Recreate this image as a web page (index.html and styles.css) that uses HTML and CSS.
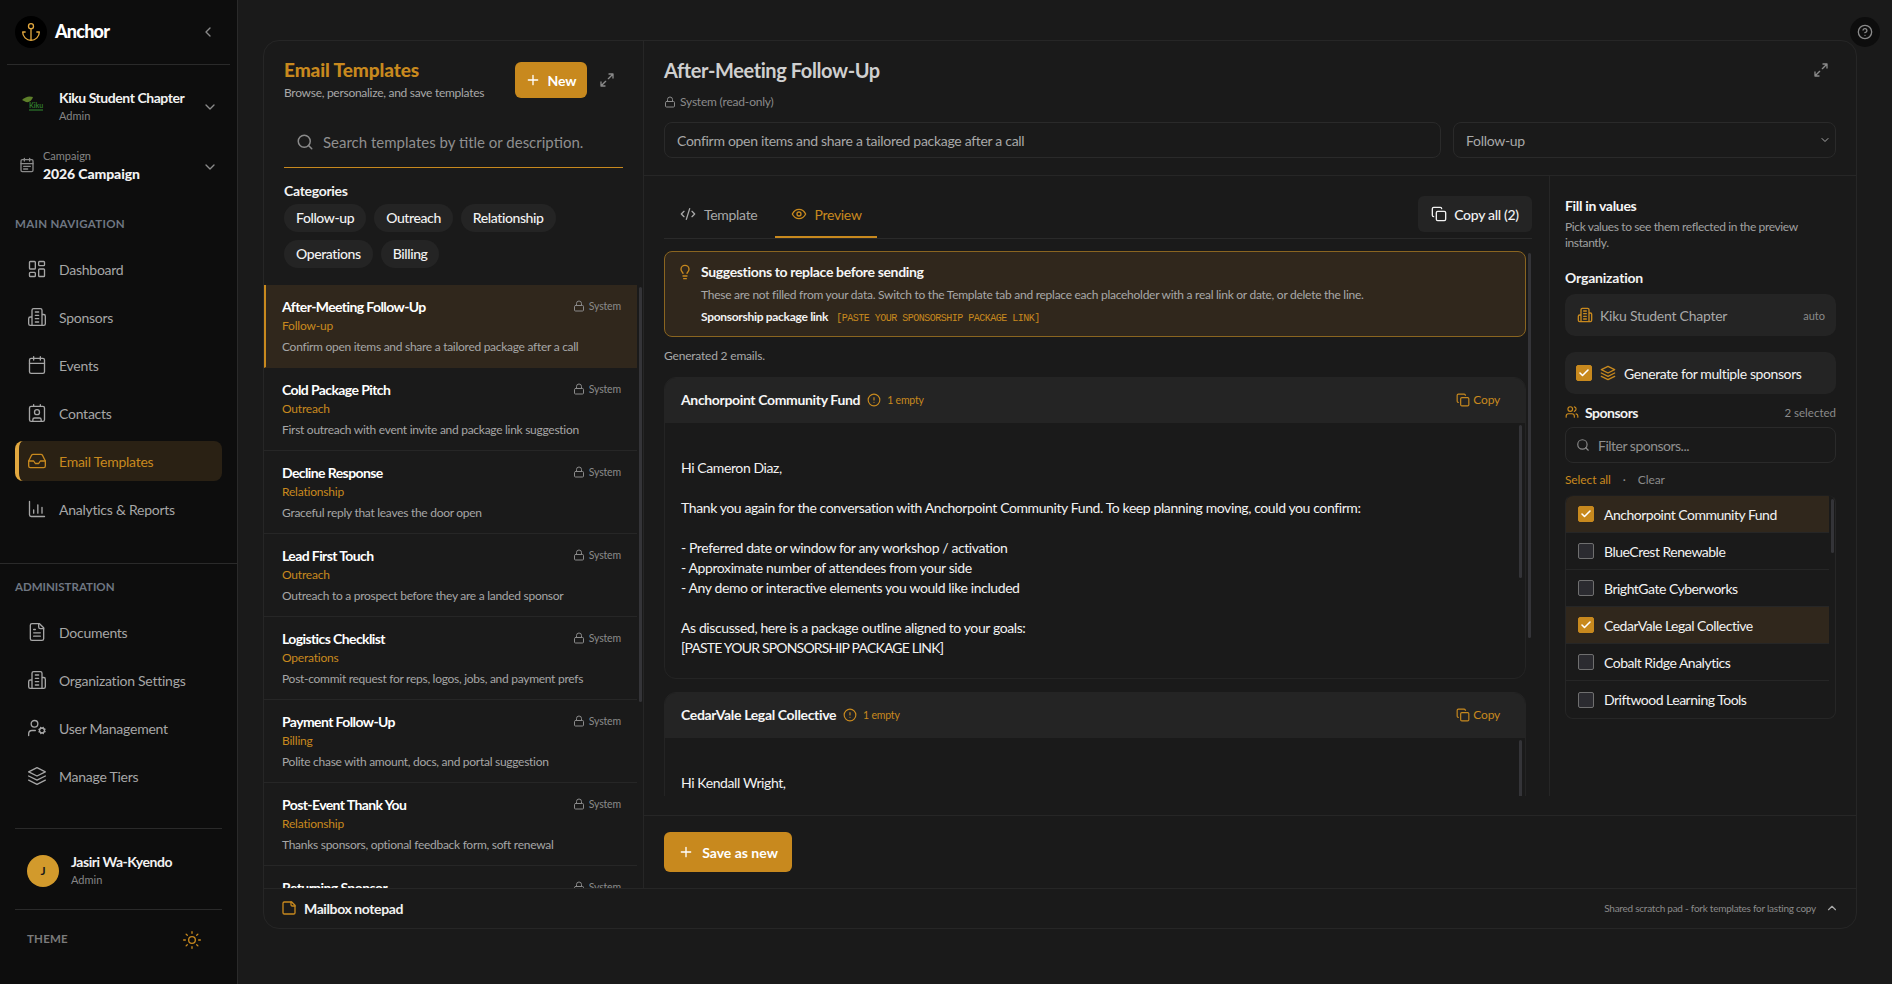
FILE: index.html
```html
<!DOCTYPE html>
<html lang="en">
<head>
<meta charset="utf-8">
<title>Anchor - Email Templates</title>
<link rel="stylesheet" href="styles.css">
</head>
<body>
<svg class="sprite" aria-hidden="true">
<defs>
<symbol id="i-left" viewBox="0 0 24 24"><path d="m15 18-6-6 6-6"/></symbol>
<symbol id="i-down" viewBox="0 0 24 24"><path d="m6 9 6 6 6-6"/></symbol>
<symbol id="i-up" viewBox="0 0 24 24"><path d="m18 15-6-6-6 6"/></symbol>
<symbol id="i-anchor" viewBox="0 0 24 24"><circle cx="12" cy="5" r="3"/><path d="M12 22V8M5 12H2a10 10 0 0 0 20 0h-3"/></symbol>
<symbol id="i-camp" viewBox="0 0 24 24"><rect x="3" y="4" width="18" height="18" rx="2"/><path d="M16 2v4M8 2v4M3 10h18M7 14h10M7 18h6"/></symbol>
<symbol id="i-dash" viewBox="0 0 24 24"><rect x="3" y="3" width="7" height="9" rx="1"/><rect x="14" y="3" width="7" height="5" rx="1"/><rect x="14" y="12" width="7" height="9" rx="1"/><rect x="3" y="16" width="7" height="5" rx="1"/></symbol>
<symbol id="i-bld" viewBox="0 0 24 24"><path d="M6 22V4a2 2 0 0 1 2-2h8a2 2 0 0 1 2 2v18ZM6 12H4a2 2 0 0 0-2 2v6a2 2 0 0 0 2 2h2M18 9h2a2 2 0 0 1 2 2v9a2 2 0 0 1-2 2h-2M10 6h4M10 10h4M10 14h4M10 18h4"/></symbol>
<symbol id="i-cal" viewBox="0 0 24 24"><rect x="3" y="4" width="18" height="18" rx="2"/><path d="M16 2v4M8 2v4M3 10h18"/></symbol>
<symbol id="i-contact" viewBox="0 0 24 24"><path d="M16 2v2M7 22v-2a2 2 0 0 1 2-2h6a2 2 0 0 1 2 2v2M8 2v2"/><circle cx="12" cy="11" r="3"/><rect x="3" y="4" width="18" height="18" rx="2"/></symbol>
<symbol id="i-inbox" viewBox="0 0 24 24"><path d="M22 12h-6l-2 3h-4l-2-3H2"/><path d="M5.45 5.11 2 12v6a2 2 0 0 0 2 2h16a2 2 0 0 0 2-2v-6l-3.45-6.89A2 2 0 0 0 16.76 4H7.24a2 2 0 0 0-1.79 1.11z"/></symbol>
<symbol id="i-chart" viewBox="0 0 24 24"><path d="M3 3v16a2 2 0 0 0 2 2h16M8 17v-4M13 17V7M18 17v-7"/></symbol>
<symbol id="i-file" viewBox="0 0 24 24"><path d="M15 2H6a2 2 0 0 0-2 2v16a2 2 0 0 0 2 2h12a2 2 0 0 0 2-2V7Z"/><path d="M14 2v4a2 2 0 0 0 2 2h4M10 9H8M16 13H8M16 17H8"/></symbol>
<symbol id="i-ucog" viewBox="0 0 24 24"><circle cx="18" cy="15" r="3"/><circle cx="9" cy="7" r="4"/><path d="M10 15H6a4 4 0 0 0-4 4v2M21.7 16.4l-.9-.3M15.2 13.9l-.9-.3M16.6 18.7l.3-.9M19.1 12.2l.3-.9M19.6 18.7l-.4-1M16.8 12.3l-.4-1M14.3 16.6l1-.4M20.7 13.8l1-.4"/></symbol>
<symbol id="i-layers" viewBox="0 0 24 24"><path d="M12 2 2 7l10 5 10-5-10-5Z"/><path d="m2 12 10 5 10-5M2 17l10 5 10-5"/></symbol>
<symbol id="i-sun" viewBox="0 0 24 24"><circle cx="12" cy="12" r="4"/><path d="M12 2v2M12 20v2M4.93 4.93l1.41 1.41M17.66 17.66l1.41 1.41M2 12h2M20 12h2M6.34 17.66l-1.41 1.41M19.07 4.93l-1.41 1.41"/></symbol>
<symbol id="i-plus" viewBox="0 0 24 24"><path d="M5 12h14M12 5v14"/></symbol>
<symbol id="i-expand" viewBox="0 0 24 24"><path d="M15 3h6v6M9 21H3v-6M21 3l-7 7M3 21l7-7"/></symbol>
<symbol id="i-search" viewBox="0 0 24 24"><circle cx="11" cy="11" r="8"/><path d="m21 21-4.3-4.3"/></symbol>
<symbol id="i-lock" viewBox="0 0 24 24"><rect x="3" y="11" width="18" height="11" rx="2"/><path d="M7 11V7a5 5 0 0 1 10 0v4"/></symbol>
<symbol id="i-code" viewBox="0 0 24 24"><path d="m18 16 4-4-4-4M6 8l-4 4 4 4M14.5 4l-5 16"/></symbol>
<symbol id="i-eye" viewBox="0 0 24 24"><path d="M2 12s3.5-7 10-7 10 7 10 7-3.5 7-10 7-10-7-10-7Z"/><circle cx="12" cy="12" r="3"/></symbol>
<symbol id="i-copy" viewBox="0 0 24 24"><rect x="8" y="8" width="14" height="14" rx="2"/><path d="M4 16c-1.100 0-2-.9-2-2V4c0-1.100.9-2 2-2h10c1.100 0 2 .9 2 2"/></symbol>
<symbol id="i-bulb" viewBox="0 0 24 24"><path d="M15 14c.2-1 .7-1.700 1.500-2.500 1-.9 1.500-2.200 1.500-3.500A6 6 0 0 0 6 8c0 1 .2 2.200 1.500 3.500.7.7 1.300 1.500 1.500 2.500M9 18h6M10 22h4"/></symbol>
<symbol id="i-alert" viewBox="0 0 24 24"><circle cx="12" cy="12" r="10"/><path d="M12 8v4M12 16h.01"/></symbol>
<symbol id="i-users" viewBox="0 0 24 24"><path d="M16 21v-2a4 4 0 0 0-4-4H6a4 4 0 0 0-4 4v2"/><circle cx="9" cy="7" r="4"/><path d="M22 21v-2a4 4 0 0 0-3-3.870M16 3.130a4 4 0 0 1 0 7.750"/></symbol>
<symbol id="i-note" viewBox="0 0 24 24"><path d="M16 3H5a2 2 0 0 0-2 2v14a2 2 0 0 0 2 2h14a2 2 0 0 0 2-2V8Z"/><path d="M15 3v4a2 2 0 0 0 2 2h4"/></symbol>
<symbol id="i-help" viewBox="0 0 24 24"><circle cx="12" cy="12" r="10"/><path d="M9.090 9a3 3 0 0 1 5.830 1c0 2-3 3-3 3M12 17h.01"/></symbol>
<symbol id="i-check" viewBox="0 0 24 24"><path d="M20 6 9 17l-5-5"/></symbol>
</defs>
</svg>

<div class="shell">
  <aside class="sidebar">
    <div class="brand">
      <span class="brand-mark"><svg class="ic ic-20 gold-soft"><use href="#i-anchor"/></svg></span>
      <span class="brand-name">Anchor</span>
      <svg class="ic ic-16 muted brand-toggle"><use href="#i-left"/></svg>
    </div>
    <div class="org">
      <span class="org-logo">
        <svg class="org-leaf" viewBox="0 0 12 8"><path d="M0 4 Q5 -1 11 1 Q9 7 4 6 Z"/></svg>
        <span class="org-kiku">Kiku</span>
      </span>
      <span class="stack">
        <span class="org-name">Kiku Student Chapter</span>
        <span class="org-role">Admin</span>
      </span>
      <svg class="ic ic-16 muted push"><use href="#i-down"/></svg>
    </div>
    <div class="camp">
      <svg class="ic ic-16 muted"><use href="#i-camp"/></svg>
      <span class="stack">
        <span class="org-role">Campaign</span>
        <span class="org-name bold">2026 Campaign</span>
      </span>
      <svg class="ic ic-16 muted push"><use href="#i-down"/></svg>
    </div>
    <div class="nav-label">MAIN NAVIGATION</div>
    <nav class="nav">
      <a class="nav-item"><svg class="ic ic-20"><use href="#i-dash"/></svg>Dashboard</a>
      <a class="nav-item"><svg class="ic ic-20"><use href="#i-bld"/></svg>Sponsors</a>
      <a class="nav-item"><svg class="ic ic-20"><use href="#i-cal"/></svg>Events</a>
      <a class="nav-item"><svg class="ic ic-20"><use href="#i-contact"/></svg>Contacts</a>
      <a class="nav-item active"><svg class="ic ic-20"><use href="#i-inbox"/></svg>Email Templates</a>
      <a class="nav-item"><svg class="ic ic-20"><use href="#i-chart"/></svg>Analytics &amp; Reports</a>
    </nav>
    <div class="side-rule"></div>
    <div class="nav-label admin">ADMINISTRATION</div>
    <nav class="nav">
      <a class="nav-item"><svg class="ic ic-20"><use href="#i-file"/></svg>Documents</a>
      <a class="nav-item"><svg class="ic ic-20"><use href="#i-bld"/></svg>Organization Settings</a>
      <a class="nav-item"><svg class="ic ic-20"><use href="#i-ucog"/></svg>User Management</a>
      <a class="nav-item"><svg class="ic ic-20"><use href="#i-layers"/></svg>Manage Tiers</a>
    </nav>
    <div class="user">
      <span class="avatar">J</span>
      <span class="stack">
        <span class="org-name">Jasiri Wa-Kyendo</span>
        <span class="org-role">Admin</span>
      </span>
    </div>
    <div class="theme">
      <span class="theme-label">THEME</span>
      <svg class="ic ic-20 gold"><use href="#i-sun"/></svg>
    </div>
  </aside>

  <main class="main">
    <section class="panel">
      <div class="panel-top">
        <div class="col-list">
          <div class="list-head">
            <div class="list-title-wrap">
              <h1 class="list-title">Email Templates</h1>
              <p class="list-sub">Browse, personalize, and save templates</p>
            </div>
            <button class="btn-new"><svg class="ic ic-16"><use href="#i-plus"/></svg>New</button>
            <svg class="ic ic-16 muted"><use href="#i-expand"/></svg>
          </div>
          <div class="search">
            <svg class="ic ic-18 muted"><use href="#i-search"/></svg>
            <span>Search templates by title or description.</span>
          </div>
          <div class="cats-label">Categories</div>
          <div class="chips">
            <span class="chip">Follow-up</span>
            <span class="chip">Outreach</span>
            <span class="chip">Relationship</span>
            <span class="chip">Operations</span>
            <span class="chip">Billing</span>
          </div>
          <div class="items">
            <article class="item selected">
              <div class="item-row"><span class="item-title">After-Meeting Follow-Up</span><span class="sys"><svg class="ic ic-12"><use href="#i-lock"/></svg>System</span></div>
              <div class="item-cat">Follow-up</div>
              <div class="item-desc">Confirm open items and share a tailored package after a call</div>
            </article>
            <article class="item">
              <div class="item-row"><span class="item-title">Cold Package Pitch</span><span class="sys"><svg class="ic ic-12"><use href="#i-lock"/></svg>System</span></div>
              <div class="item-cat">Outreach</div>
              <div class="item-desc">First outreach with event invite and package link suggestion</div>
            </article>
            <article class="item">
              <div class="item-row"><span class="item-title">Decline Response</span><span class="sys"><svg class="ic ic-12"><use href="#i-lock"/></svg>System</span></div>
              <div class="item-cat">Relationship</div>
              <div class="item-desc">Graceful reply that leaves the door open</div>
            </article>
            <article class="item">
              <div class="item-row"><span class="item-title">Lead First Touch</span><span class="sys"><svg class="ic ic-12"><use href="#i-lock"/></svg>System</span></div>
              <div class="item-cat">Outreach</div>
              <div class="item-desc">Outreach to a prospect before they are a landed sponsor</div>
            </article>
            <article class="item">
              <div class="item-row"><span class="item-title">Logistics Checklist</span><span class="sys"><svg class="ic ic-12"><use href="#i-lock"/></svg>System</span></div>
              <div class="item-cat">Operations</div>
              <div class="item-desc">Post-commit request for reps, logos, jobs, and payment prefs</div>
            </article>
            <article class="item">
              <div class="item-row"><span class="item-title">Payment Follow-Up</span><span class="sys"><svg class="ic ic-12"><use href="#i-lock"/></svg>System</span></div>
              <div class="item-cat">Billing</div>
              <div class="item-desc">Polite chase with amount, docs, and portal suggestion</div>
            </article>
            <article class="item">
              <div class="item-row"><span class="item-title">Post-Event Thank You</span><span class="sys"><svg class="ic ic-12"><use href="#i-lock"/></svg>System</span></div>
              <div class="item-cat">Relationship</div>
              <div class="item-desc">Thanks sponsors, optional feedback form, soft renewal</div>
            </article>
            <article class="item">
              <div class="item-row"><span class="item-title">Returning Sponsor</span><span class="sys"><svg class="ic ic-12"><use href="#i-lock"/></svg>System</span></div>
            </article>
            <span class="thumb thumb-list"></span>
          </div>
        </div>

        <div class="col-detail">
          <header class="detail-head">
            <div class="detail-title-row">
              <h2 class="detail-title">After-Meeting Follow-Up</h2>
              <svg class="ic ic-16 muted"><use href="#i-expand"/></svg>
            </div>
            <div class="readonly"><svg class="ic ic-12"><use href="#i-lock"/></svg>System (read-only)</div>
            <div class="fields">
              <div class="field field-desc">Confirm open items and share a tailored package after a call</div>
              <div class="field field-cat">Follow-up<svg class="ic ic-12 light"><use href="#i-down"/></svg></div>
            </div>
          </header>
          <div class="detail-body">
            <div class="editor">
              <div class="tabs">
                <span class="tab"><svg class="ic ic-16"><use href="#i-code"/></svg>Template</span>
                <span class="tab on"><svg class="ic ic-16"><use href="#i-eye"/></svg>Preview</span>
                <button class="btn-copyall"><svg class="ic ic-16"><use href="#i-copy"/></svg>Copy all (2)</button>
              </div>
              <div class="scroller">
                <div class="alert">
                  <svg class="ic ic-16 gold"><use href="#i-bulb"/></svg>
                  <div class="alert-body">
                    <div class="alert-title">Suggestions to replace before sending</div>
                    <div class="alert-text">These are not filled from your data. Switch to the Template tab and replace each placeholder with a real link or date, or delete the line.</div>
                    <div class="alert-link"><b>Sponsorship package link</b><code>[PASTE YOUR SPONSORSHIP PACKAGE LINK]</code></div>
                  </div>
                </div>
                <div class="generated">Generated 2 emails.</div>
                <div class="card">
                  <div class="card-head">
                    <span class="card-name">Anchorpoint Community Fund</span>
                    <svg class="ic ic-14 gold"><use href="#i-alert"/></svg>
                    <span class="card-empty">1 empty</span>
                    <span class="card-copy"><svg class="ic ic-14"><use href="#i-copy"/></svg>Copy</span>
                  </div>
                  <div class="card-body">Hi Cameron Diaz,

Thank you again for the conversation with Anchorpoint Community Fund. To keep planning moving, could you confirm:

- Preferred date or window for any workshop / activation
- Approximate number of attendees from your side
- Any demo or interactive elements you would like included

As discussed, here is a package outline aligned to your goals:
<span class="placeholder">[PASTE YOUR SPONSORSHIP PACKAGE LINK]</span></div>
                  <span class="thumb thumb-card"></span>
                </div>
                <div class="card">
                  <div class="card-head">
                    <span class="card-name">CedarVale Legal Collective</span>
                    <svg class="ic ic-14 gold"><use href="#i-alert"/></svg>
                    <span class="card-empty">1 empty</span>
                    <span class="card-copy"><svg class="ic ic-14"><use href="#i-copy"/></svg>Copy</span>
                  </div>
                  <div class="card-body">Hi Kendall Wright,</div>
                  <span class="thumb thumb-card"></span>
                </div>
                <span class="thumb thumb-scroller"></span>
              </div>
            </div>
            <aside class="values">
              <div class="v-title">Fill in values</div>
              <p class="v-sub">Pick values to see them reflected in the preview instantly.</p>
              <div class="v-label">Organization</div>
              <div class="v-box org-box">
                <svg class="ic ic-16 gold"><use href="#i-bld"/></svg>
                <span class="org-box-name">Kiku Student Chapter</span>
                <span class="auto">auto</span>
              </div>
              <div class="v-box multi-box">
                <span class="cb on"><svg class="ic ic-12"><use href="#i-check"/></svg></span>
                <svg class="ic ic-16 gold"><use href="#i-layers"/></svg>
                <span class="multi-text">Generate for multiple sponsors</span>
              </div>
              <div class="sp-head">
                <svg class="ic ic-14 gold"><use href="#i-users"/></svg>
                <span class="sp-title">Sponsors</span>
                <span class="sp-count">2 selected</span>
              </div>
              <div class="filter"><svg class="ic ic-14 muted"><use href="#i-search"/></svg>Filter sponsors...</div>
              <div class="sel-row"><span class="sel-all">Select all</span><span class="sel-dot">&middot;</span><span>Clear</span></div>
              <div class="sp-list">
                <div class="sp-row picked"><span class="cb on"><svg class="ic ic-12"><use href="#i-check"/></svg></span>Anchorpoint Community Fund</div>
                <div class="sp-row"><span class="cb"></span>BlueCrest Renewable</div>
                <div class="sp-row"><span class="cb"></span>BrightGate Cyberworks</div>
                <div class="sp-row picked"><span class="cb on"><svg class="ic ic-12"><use href="#i-check"/></svg></span>CedarVale Legal Collective</div>
                <div class="sp-row"><span class="cb"></span>Cobalt Ridge Analytics</div>
                <div class="sp-row"><span class="cb"></span>Driftwood Learning Tools</div>
                <span class="thumb thumb-sp"></span>
              </div>
            </aside>
          </div>
          <footer class="save-bar">
            <button class="btn-save"><svg class="ic ic-16"><use href="#i-plus"/></svg>Save as new</button>
          </footer>
        </div>
      </div>
      <div class="notepad">
        <svg class="ic ic-16 gold"><use href="#i-note"/></svg>
        <span class="note-title">Mailbox notepad</span>
        <span class="note-hint">Shared scratch pad - fork templates for lasting copy</span>
        <svg class="ic ic-14 light"><use href="#i-up"/></svg>
      </div>
    </section>
    <button class="help" aria-label="Help"><svg class="ic ic-16"><use href="#i-help"/></svg></button>
  </main>
</div>
</body>
</html>
```
FILE: styles.css
```css
* { box-sizing: border-box; }
html, body { margin: 0; height: 100%; }
body {
  background: #1a1a1a;
  color: #f2f2f2;
  font-family: "Lato", "Noto Sans", sans-serif;
  font-size: 14px;
  overflow: hidden;
}
h1, h2, p { margin: 0; }
button { font-family: inherit; border: 0; cursor: pointer; }
.sprite { position: absolute; width: 0; height: 0; }
.ic { fill: none; stroke: currentColor; stroke-width: 2; stroke-linecap: round; stroke-linejoin: round; flex: none; display: block; }
.ic-12 { width: 12px; height: 12px; }
.ic-14 { width: 14px; height: 14px; }
.ic-16 { width: 16px; height: 16px; }
.ic-18 { width: 18px; height: 18px; }
.ic-20 { width: 20px; height: 20px; stroke-width: 1.6; }
.muted { color: #8a8a8a; }
.light { color: #a8a8a8; }
.gold { color: #c8891e; }
.gold-soft { color: #e2a83f; }

.shell { display: flex; height: 984px; }

/* Sidebar */
.sidebar {
  width: 238px;
  flex: none;
  background: #0d0d0d;
  border-right: 1px solid #2a2a2a;
  display: flex;
  flex-direction: column;
}
.brand {
  display: flex;
  align-items: center;
  height: 65px;
  margin: 0 7px;
  padding: 0 14px 1px 8px;
  border-bottom: 1px solid #2a2a2a;
}
.brand-mark {
  width: 32px; height: 32px; border-radius: 50%;
  background: #000; display: flex; align-items: center; justify-content: center;
}
.brand-name { margin-left: 8px; margin-top: -2px; font-size: 18px; font-weight: 900; color: #fff; letter-spacing: -.8px; }
.brand-toggle { margin-left: auto; }
.org { display: flex; align-items: center; height: 64px; margin-top: 10px; padding: 0 19px 0 22px; }
.org-logo { width: 24px; height: 24px; margin-right: 13px; position: relative; flex: none; }
.org-leaf { position: absolute; left: 0; top: 1px; width: 12px; height: 8px; fill: #5d7f2a; }
.org-kiku { position: absolute; left: 7px; top: 6px; font-size: 7px; line-height: 8px; color: #2f7a2c; font-weight: 700; border-bottom: 2px solid #1f4d1f; }
.stack { display: flex; flex-direction: column; }
.org-name { font-size: 14px; line-height: 18px; color: #f2f2f2; font-weight: 700; letter-spacing: -.45px; }
.org-name.bold { font-weight: 900; letter-spacing: -.1px; }
.org-role { font-size: 11px; line-height: 18px; color: #858585; }
.push { margin-left: auto; }
.camp { display: flex; align-items: center; gap: 8px; height: 44px; margin-top: 4px; padding: 0 19px 0 19px; }
.camp .push { margin-top: 3px; }
.nav-label { margin: 29px 0 0 15px; height: 16px; font-size: 11.5px; line-height: 16px; font-weight: 700; letter-spacing: .3px; color: #6f7782; }
.nav-label.admin { margin-top: 15px; letter-spacing: 0; }
.nav { display: flex; flex-direction: column; margin-top: 17px; padding: 0 15px; }
.nav-item {
  display: flex; align-items: center; gap: 12px;
  height: 40px; margin-bottom: 8px; padding-left: 12px;
  color: #a6a6a6; font-size: 14px; border-radius: 8px; letter-spacing: -.25px;
}
.nav-item:last-child { margin-bottom: 0; }
.nav-item.active {
  background: #2a2114; color: #c8891e;
  border-left: 4px solid #e2a83f; padding-left: 8px;
}
.side-rule { margin-top: 34px; border-top: 1px solid #2a2a2a; }
.user {
  margin: 32px 15px 0;
  height: 82px; padding: 3px 12px 0;
  display: flex; align-items: center; gap: 12px;
  border-top: 1px solid #2a2a2a; border-bottom: 1px solid #2a2a2a;
}
.avatar {
  width: 32px; height: 32px; border-radius: 50%; flex: none;
  background: #d29a2c; color: #1a1a1a; font-size: 12px; font-weight: 700;
  display: flex; align-items: center; justify-content: center;
}
.theme { display: flex; align-items: center; justify-content: space-between; padding: 20px 35px 0 27px; font-size: 11.5px; font-weight: 700; letter-spacing: .2px; color: #7b7b7b; }
.theme-label { padding-bottom: 3px; }

/* Main */
.main { flex: 1; min-width: 0; position: relative; padding: 40px 35px 0 25px; }
.panel {
  height: 889px;
  border: 1px solid #262626;
  border-radius: 16px;
  display: flex;
  flex-direction: column;
  overflow: hidden;
}
.panel-top { display: flex; height: 847px; }
.col-list {
  width: 380px; flex: none;
  border-right: 1px solid #262626;
  display: flex; flex-direction: column;
}
.list-head { display: flex; align-items: center; height: 78px; padding: 0 28px 0 20px; }
.list-title-wrap { flex: 1; min-width: 0; }
.list-title { font-size: 19px; line-height: 26px; font-weight: 900; color: #c8891e; letter-spacing: -.1px; }
.list-sub { font-size: 12px; line-height: 20px; color: #a8a8a8; white-space: nowrap; letter-spacing: -.28px; }
.btn-new {
  width: 72px; height: 36px; margin-right: 12px; border-radius: 6px;
  background: #c8891e; color: #fff; font-size: 14px; font-weight: 700;
  display: flex; align-items: center; justify-content: center; gap: 6px;
}
.search {
  margin: 13px 20px 0; height: 36px; padding: 0 0 15px 12px;
  display: flex; align-items: center; gap: 9px;
  border-bottom: 1px solid #c8891e;
  color: #8f8f8f; font-size: 15px; white-space: nowrap;
}
.cats-label { margin: 13px 20px 0; font-size: 14px; line-height: 20px; font-weight: 700; color: #f2f2f2; letter-spacing: -.3px; }
.chips { display: flex; flex-wrap: wrap; gap: 8px; margin: 3px 20px 0; }
.chip {
  height: 28px; padding: 0 12px 2px; border-radius: 14px;
  background: #242424; color: #f2f2f2; font-size: 14px; font-weight: 500;
  display: flex; align-items: center; letter-spacing: -.4px;
}
.items { position: relative; flex: 1; min-height: 0; margin-top: 17px; padding-right: 6px; overflow: hidden; }
.item { height: 83px; padding: 11px 16px 0 18px; border-bottom: 1px solid #262626; }
.item.selected { background: #30271c; border-left: 2px solid #c8891e; padding-left: 16px; border-bottom-color: #30271c; }
.item-row { display: flex; align-items: center; justify-content: space-between; height: 20px; }
.item-title { font-size: 14px; font-weight: 700; color: #fff; letter-spacing: -.6px; }
.sys { display: flex; align-items: center; gap: 4px; font-size: 10.5px; color: #8a8a8a; letter-spacing: -.15px; }
.item-cat { font-size: 12px; line-height: 20px; color: #c8891e; letter-spacing: -.2px; }
.item-desc { font-size: 12px; line-height: 20px; margin-top: 1px; color: #a6a6a6; white-space: nowrap; letter-spacing: -.28px; }

.col-detail { flex: 1; min-width: 0; display: flex; flex-direction: column; }
.detail-head { height: 135px; padding: 0 20px 0 20px; border-bottom: 1px solid #262626; flex: none; }
.detail-title-row { display: flex; align-items: center; justify-content: space-between; padding-top: 12px; height: 46px; }
.detail-title-row .ic { margin-right: 7px; }
.detail-title { font-size: 20px; font-weight: 700; color: #cfcfcf; letter-spacing: -.4px; }
.readonly { display: flex; align-items: center; gap: 4px; margin-top: 6px; font-size: 12px; line-height: 18px; color: #8a8a8a; letter-spacing: -.2px; }
.fields { display: flex; gap: 12px; margin-top: 11px; }
.field {
  height: 36px; border: 1px solid #2a2a2a; border-radius: 8px;
  padding: 0 12px; display: flex; align-items: center;
  font-size: 14px; color: #a8a8a8; letter-spacing: -.3px;
}
.field-desc { flex: 1; min-width: 0; }
.field-cat { width: 383px; justify-content: space-between; padding-right: 4px; }
.detail-body { flex: 1; min-height: 0; display: flex; }
.editor { width: 906px; flex: none; padding: 20px 17px 0 20px; border-right: 1px solid #262626; margin-bottom: 20px; display: flex; flex-direction: column; min-height: 0; }
.tabs { display: flex; align-items: flex-start; height: 43px; border-bottom: 1px solid #2a2a2a; flex: none; }
.tab {
  display: flex; align-items: center; gap: 8px;
  height: 42px; padding: 0 18px 6px 16px; font-size: 14px; color: #a8a8a8; letter-spacing: -.3px;
}
.tab.on { width: 102px; gap: 7px; color: #c8891e; border-bottom: 2px solid #c8891e; padding: 0 16px 4px 16px; }
.btn-copyall {
  margin-left: auto; width: 114px; height: 36px; border-radius: 6px;
  background: #242424; color: #f2f2f2; font-size: 14px; font-weight: 500; letter-spacing: -.3px;
  display: flex; align-items: center; justify-content: center; gap: 7px;
}
.scroller { position: relative; flex: 1; min-height: 0; overflow: hidden; padding: 12px 6px 0 0; }
.alert {
  height: 86px; padding: 8px 16px 0 12px;
  display: flex; gap: 8px;
  border: 1px solid #8a6520; border-radius: 8px; background: #30271c;
}
.alert > .ic { margin-top: 4px; }
.alert-title { font-size: 14px; line-height: 24px; font-weight: 700; color: #f6f6f6; letter-spacing: -.35px; }
.alert-text { font-size: 12px; line-height: 22px; color: #a8a8a8; white-space: nowrap; letter-spacing: -.27px; }
.alert-link { display: flex; align-items: baseline; gap: 8px; font-size: 12px; line-height: 22px; color: #f2f2f2; }
.alert-link b { letter-spacing: -.3px; }
.alert-link code { font-family: "Liberation Mono", monospace; font-size: 10px; color: #c8891e; letter-spacing: -.5px; }
.generated { height: 40px; padding-top: 10px; font-size: 12px; line-height: 18px; color: #a8a8a8; letter-spacing: -.2px; }
.card { position: relative; border: 1px solid #242424; border-radius: 12px; overflow: hidden; margin-bottom: 13px; }
.card-head {
  height: 45px; background: #242424; padding: 0 25px 2px 16px;
  display: flex; align-items: center; gap: 6px;
}
.card-head > .ic { margin-left: 1px; }
.card-name { font-size: 14px; font-weight: 700; color: #f6f6f6; letter-spacing: -.35px; }
.card-empty { font-size: 10.5px; color: #c8891e; letter-spacing: -.2px; }
.card-copy { margin-left: auto; display: flex; align-items: center; gap: 3px; font-size: 12px; color: #c8891e; letter-spacing: -.2px; }
.card-body { padding: 35px 16px 0; font-size: 14px; line-height: 20px; color: #f2f2f2; white-space: pre-line; height: 255px; letter-spacing: -.4px; }
.placeholder { letter-spacing: -.8px; }
.thumb { position: absolute; width: 3px; border-radius: 2px; background: #343438; }
.thumb-list { right: 1px; top: 2px; height: 415px; }
.thumb-card { right: 3px; top: 47px; height: 153px; }
.thumb-scroller { right: 1px; top: 14px; height: 385px; }
.values { flex: 1; min-width: 0; padding: 20px 20px 0 15px; }
.v-title { font-size: 14px; line-height: 20px; font-weight: 700; color: #f6f6f6; letter-spacing: -.3px; }
.v-sub { margin-top: 3px; font-size: 12px; line-height: 16px; color: #a0a0a0; letter-spacing: -.38px; }
.v-label { margin-top: 17px; font-size: 14px; line-height: 20px; font-weight: 700; color: #f2f2f2; letter-spacing: -.2px; }
.v-box { border-radius: 10px; background: #242424; display: flex; align-items: center; }
.org-box { margin-top: 6px; height: 42px; padding: 0 11px 0 12px; gap: 7px; color: #a8a8a8; }
.org-box-name { letter-spacing: -.25px; }
.auto { margin-left: auto; font-size: 11px; color: #8a8a8a; }
.multi-box { margin-top: 16px; height: 42px; padding: 0 11px; gap: 8px; color: #f2f2f2; }
.multi-text { letter-spacing: -.4px; }
.cb {
  width: 16px; height: 16px; border-radius: 2px; flex: none;
  background: #2b2b30; border: 1px solid #6f6f6f;
  display: flex; align-items: center; justify-content: center; color: #fff;
}
.cb.on { background: #c8891e; border-color: #c8891e; }
.cb .ic { stroke-width: 3.2; }
.sp-head { display: flex; align-items: center; gap: 6px; margin-top: 8px; height: 20px; }
.sp-title { font-weight: 700; font-size: 14px; color: #f2f2f2; letter-spacing: -.5px; }
.sp-count { margin-left: auto; font-size: 11.5px; color: #8a8a8a; }
.filter {
  margin-top: 5px; height: 36px; padding: 0 10px;
  display: flex; align-items: center; gap: 8px;
  border: 1px solid #2a2a2a; border-radius: 8px; color: #8f8f8f; font-size: 14px; letter-spacing: -.5px;
}
.sel-row { display: flex; gap: 12px; height: 32px; align-items: center; font-size: 12px; color: #8a8a8a; letter-spacing: -.1px; }
.sel-all { color: #c8891e; }
.sp-list { position: relative; height: 224px; border: 1px solid #262626; border-top-color: #1e1e1e; border-radius: 8px; overflow: hidden; padding-right: 6px; }
.sp-row {
  height: 37px; padding-left: 12px; display: flex; align-items: center; gap: 10px;
  font-size: 14px; color: #f2f2f2; border-bottom: 1px solid #262626; letter-spacing: -.5px;
}
.sp-row.picked { background: #30271c; }
.sp-row:nth-child(6) { border-bottom: 0; }
.thumb-sp { right: 1px; top: 3px; height: 54px; }
.save-bar { height: 73px; flex: none; padding: 16px 20px 0; border-top: 1px solid #262626; margin-top: -1px; }
.btn-save {
  width: 128px; height: 40px; border-radius: 6px; background: #c8891e; color: #fff;
  font-size: 14px; font-weight: 700;
  display: flex; align-items: center; justify-content: center; gap: 8px;
}
.notepad {
  height: 41px; flex: none; border-top: 1px solid #262626;
  display: flex; align-items: center; gap: 7px; padding: 0 17px 2px 17px;
}
.note-title { font-size: 14px; font-weight: 700; color: #f2f2f2; letter-spacing: -.4px; }
.note-hint { margin-left: auto; font-size: 10px; color: #8a8a8a; margin-right: 2px; letter-spacing: -.25px; }
.help {
  position: absolute; right: 12px; top: 17px;
  width: 30px; height: 30px; border-radius: 50%;
  background: #0d0d0d; color: #8a8a8a;
  display: flex; align-items: center; justify-content: center; padding: 0;
}
```
